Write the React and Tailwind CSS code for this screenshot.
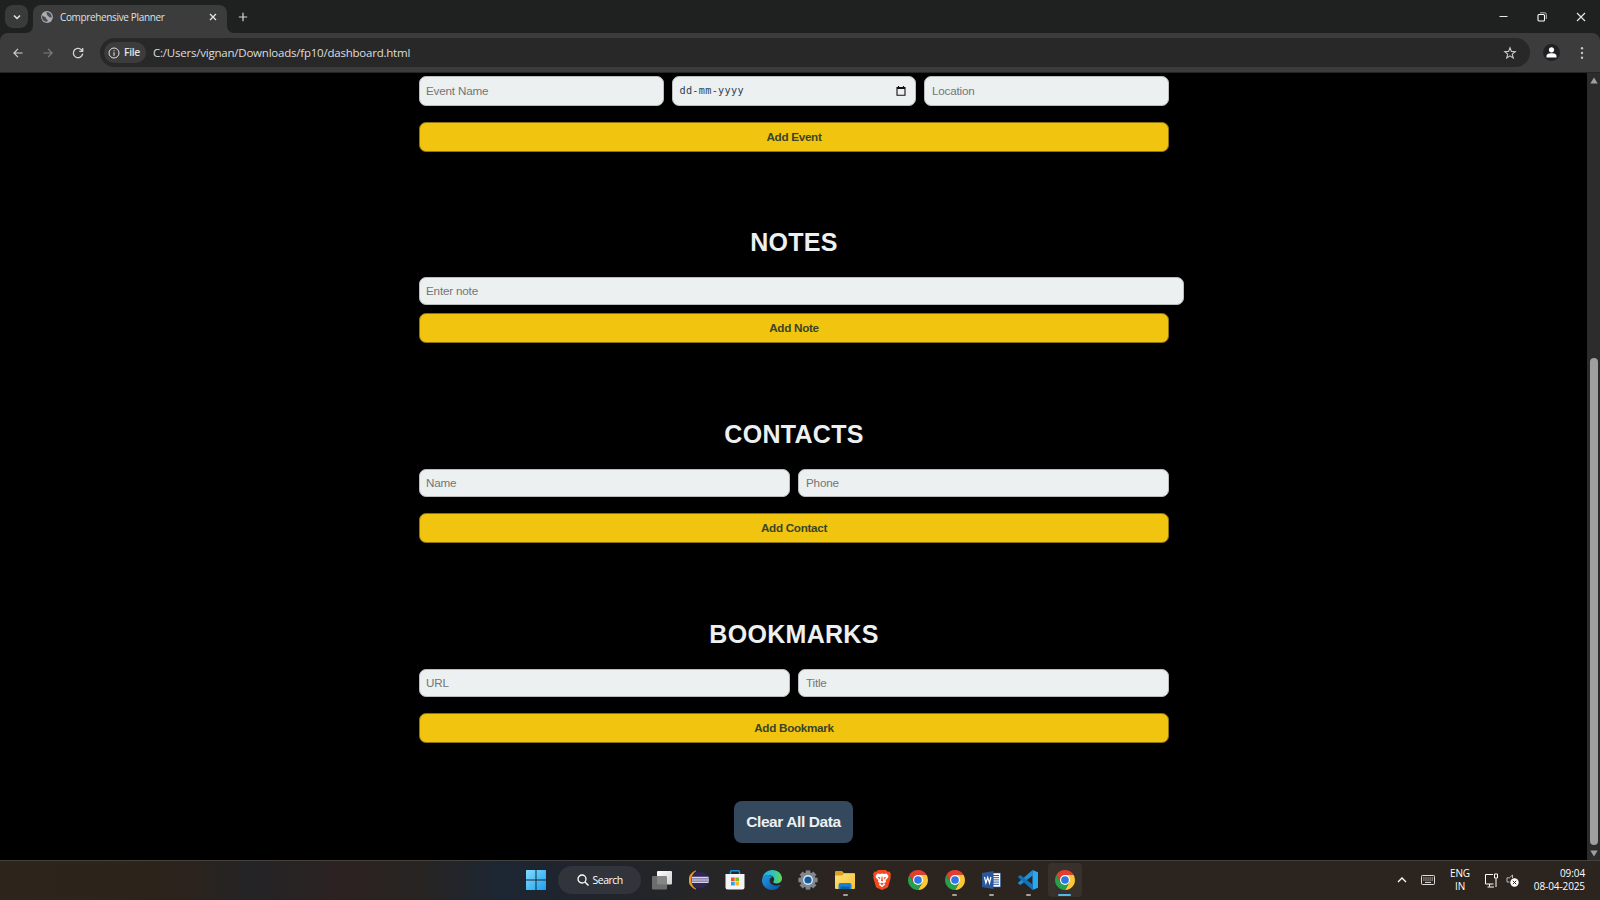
const dk = 'font-["Open_Sans",sans-serif]';

function Field({ children, w, h = 'h-7' }) {
  return (
    <div className={`${w} ${h} flex items-center rounded-[7px] border border-[#b9bcbd] bg-[#ecf0f1] px-1.5 text-[11.7px] tracking-[-0.2px] text-[#757575]`}>
      {children}
    </div>
  );
}

function AddButton({ children }) {
  return (
    <button className="flex h-[30px] w-[750px] items-center justify-center rounded-[7px] border border-[#8f760c] bg-[#f1c40f] text-[11.7px] font-bold tracking-[-0.3px] text-[#3a4528]">
      {children}
    </button>
  );
}

function Heading({ children }) {
  return <h2 className="flex h-8 w-[750px] items-center justify-center text-[25px] leading-8 font-bold tracking-[0.3px] text-[#ecf0f1]">{children}</h2>;
}

function Globe() {
  return (
    <svg viewBox="0 0 12 12" className="h-3 w-3">
      <circle cx="6" cy="6" r="5.9" fill="#a9adb1" />
      <path d="M1.2 4.2C2 5.6 3.4 5.2 4.4 6.1s.2 1.8 1.2 2.2 1.5 1 .6 2.5C3.500 11 1 9 1 6zM5.500 1.100C5 2.200 6.300 2.500 6 3.600s1.500 1 1.900 2.200 1.700.6 2.800.7C11 4 9 1.200 5.500 1.100z" fill="#4a4d50" />
    </svg>
  );
}

function Chrome() {
  return (
    <svg viewBox="0 0 48 48" className="h-5 w-5">
      <path d="M24 24V12H44.780A24 24 0 0 1 24 48L34.400 30z" fill="#fcc934" />
      <path d="M24 48A24 24 0 0 1 3.220 12L13.600 30 24 36 34.400 30z" fill="#26a04b" />
      <path d="M3.220 12A24 24 0 0 1 44.780 12H24L13.600 30z" fill="#e0402f" />
      <circle cx="24" cy="24" r="12" fill="#fff" />
      <circle cx="24" cy="24" r="9.200" fill="#2d77e5" />
    </svg>
  );
}

function Windows() {
  return (
    <svg viewBox="0 0 20 20" className="h-5 w-5">
      <defs><linearGradient id="win" x1="0" y1="0" x2="1" y2="1"><stop stopColor="#84dcfb" /><stop offset="1" stopColor="#189ff2" /></linearGradient></defs>
      <path d="M.5 0H9.500V9.500H0V.5zM10.500 0H19.500L20 .5V9.500H10.500zM0 10.500H9.500V20H.5L0 19.500zM10.500 10.500H20V19.500L19.500 20H10.500z" fill="url(#win)" />
    </svg>
  );
}

function TaskView() {
  return (
    <svg viewBox="0 0 20 19" className="h-[19px] w-5">
      <defs><linearGradient id="tv" x1="0" y1="0" x2="1" y2="1"><stop stopColor="#fff" /><stop offset="1" stopColor="#cfcfcf" /></linearGradient></defs>
      <rect x="5" y="0" width="15" height="13.500" rx="1" fill="url(#tv)" />
      <rect x="0" y="5" width="15" height="13.500" rx="1" fill="#777" fillOpacity=".88" />
    </svg>
  );
}

function Eclipse() {
  return (
    <svg viewBox="0 0 20 20" className="h-5 w-5">
      <path d="M7 .8A9.500 9.500 0 0 0 7 19.200 A11 11 0 0 1 7 .8z" fill="#f09a2a" stroke="#f09a2a" strokeWidth=".6" />
      <circle cx="11.200" cy="10" r="8.600" fill="#2f2557" />
      <path d="M3 7.500H19.600M2.800 10H20M3 12.300H19.600" stroke="#d8d6e6" strokeWidth="1.300" />
      <path d="M2.800 8.700H20M2.800 11.200H20" stroke="#a29cc4" strokeWidth="1.100" />
    </svg>
  );
}

function Store() {
  return (
    <svg viewBox="0 0 20 20" className="h-5 w-5">
      <path d="M5.500 5V2A1.300 1.300 0 0 1 6.800.7h6.400A1.300 1.300 0 0 1 14.500 2V5" fill="none" stroke="#1f93d8" strokeWidth="1.500" />
      <path d="M.5 4h19v13.500a2 2 0 0 1-2 2h-15a2 2 0 0 1-2-2z" fill="#f4f4f4" />
      <path d="M6 7.500h3.700v3.700H6z" fill="#ef5325" /><path d="M10.300 7.500H14v3.700h-3.700z" fill="#7eba28" />
      <path d="M6 11.800h3.700v3.700H6z" fill="#28a4e8" /><path d="M10.300 11.800H14v3.700h-3.700z" fill="#fbb817" />
    </svg>
  );
}

function Edge() {
  return (
    <svg viewBox="0 0 20 20" className="h-5 w-5">
      <defs>
        <linearGradient id="e1" x1="0" y1="0.300" x2="1" y2="0.300"><stop stopColor="#24a8e0" /><stop offset=".55" stopColor="#2fc4c0" /><stop offset="1" stopColor="#69d647" /></linearGradient>
        <linearGradient id="e2" x1="0" y1="0" x2="1" y2="1"><stop stopColor="#1f9de4" /><stop offset="1" stopColor="#0c4fa3" /></linearGradient>
      </defs>
      <path d="M.3 9C.8 3.500 5.200 0 10.200 0 16 0 20 4 20 8.300c0 3.200-2.400 5.200-5.200 5.200-2.500 0-3.500-.8-3.500-1.500 0-.6.900-.9.900-2.700C12.200 6.800 9.500 5 6.500 5 3.600 5 1 6.500.3 9z" fill="url(#e1)" />
      <path d="M6.500 5C3 5 0 7.300 0 10.500 0 15.700 4.500 20 10 20c4 0 6.800-2 8.300-4.500.2-.4-.2-.7-.6-.5-1.200.5-2.500.7-3.600.7C10.400 15.700 7.600 13.500 7.600 10.600c0-1.700.9-3 2.600-3.700C9.300 5.700 8 5 6.500 5z" fill="url(#e2)" />
    </svg>
  );
}

function Gear() {
  return (
    <svg viewBox="0 0 20 20" className="h-5 w-5">
      <g stroke="#80878e" strokeWidth="4.600">
        <path d="M10 .4V19.600" />
        <path d="M10 .4V19.600" transform="rotate(45 10 10)" />
        <path d="M10 .4V19.600" transform="rotate(90 10 10)" />
        <path d="M10 .4V19.600" transform="rotate(135 10 10)" />
      </g>
      <circle cx="10" cy="10" r="7.700" fill="#80878e" />
      <circle cx="10" cy="10" r="4.900" fill="#e9edf0" />
      <circle cx="10" cy="10" r="3.600" fill="#1259a0" />
    </svg>
  );
}

function Folder() {
  return (
    <svg viewBox="0 0 20 18" className="h-[18px] w-5">
      <defs><linearGradient id="fo" x1="0" y1="0" x2="1" y2="1"><stop stopColor="#ffe07a" /><stop offset="1" stopColor="#f8c137" /></linearGradient></defs>
      <path d="M0 1a1 1 0 0 1 1-1h6l2 2h10a1 1 0 0 1 1 1v5H0z" fill="#dba11d" />
      <path d="M0 4.500h7l2-2h10a1 1 0 0 1 1 1v13.500a1 1 0 0 1-1 1H1a1 1 0 0 1-1-1z" fill="url(#fo)" />
      <path d="M3.500 18V14a2 2 0 0 1 2-2h9a2 2 0 0 1 2 2v4z" fill="#1683cf" />
      <path d="M5.500 15.500h9V18h-9z" fill="#0a60a8" />
    </svg>
  );
}

function Brave() {
  return (
    <svg viewBox="0 0 18 20" className="h-5 w-[18px]">
      <path d="M5 0h8l1.700 1.800 1.800-.2L18 4.200l-.6 1.700.4 1.500-2.600 9c-.3.800-.8 1.300-1.500 1.700L9 20.000 4.300 18.100c-.7-.4-1.200-.9-1.500-1.700L.2 7.400l.4-1.500L0 4.200l1.500-2.600 1.800.2z" fill="#f4491f" />
      <path d="M9 3.500l2 .4 2.500-.5 2 2.600-.6 1.700-2.300 2.500.5 1.700-2 1.200 1 1.700L9 17.200l-3.100-2.400 1-1.700-2-1.200.5-1.700L3.100 7.700 2.500 6l2-2.600 2.500.5z" fill="#fff" />
      <path d="M4.500 6.800l2.800.7-.4 2zM13.500 6.800l-2.800.7.4 2zM9 12.700l2 .9-2 1.600-2-1.600zM8.600 6.500h.8l.5 4.500-.9.500-.9-.5z" fill="#f4491f" />
    </svg>
  );
}

function Word() {
  return (
    <svg viewBox="0 0 19 18" className="h-[18px] w-[19px]">
      <rect x="9" y="2" width="9.500" height="14" fill="#fff" stroke="#2b579a" strokeWidth=".6" />
      <path d="M11 4.500h6M11 6.700h6M11 8.900h6M11 11.100h6M11 13.300h6" stroke="#2b579a" strokeWidth="1" />
      <path d="M0 2 11.500 0v18L0 16z" fill="#2b579a" />
      <path d="M2.500 6l1.400 6L5.700 6.500 7.500 12l1.400-6" fill="none" stroke="#fff" strokeWidth="1.200" />
    </svg>
  );
}

function Code() {
  return (
    <svg viewBox="0 0 20 20" className="h-5 w-5">
      <path d="M14.500 0 20 2.300v15.400L14.500 20 14.500 14.500V5.500z" fill="#2aa7f0" />
      <path d="M14.500 0 15 5.300 2.300 15 0 13.300V12.800z" fill="#1f8fd9" />
      <path d="M14.500 20 15 14.700 2.300 5 0 6.700V7.200z" fill="#0f74bd" />
    </svg>
  );
}

function Task({ children, dot, active }) {
  return (
    <div className={`relative flex h-[34px] w-[34px] items-center justify-center rounded ${active ? 'bg-[#38312b]' : ''}`}>
      {children}
      {dot && <span className="absolute bottom-px h-[2px] w-[5px] rounded-full bg-[#a5a09b]" />}
      {active && <span className="absolute bottom-px h-[2.500px] w-[13px] rounded-full bg-[#54b6ea]" />}
    </div>
  );
}

function TabBar() {
  return (
    <div className="flex h-[33px] bg-[#1f2121]">
      <div className="flex w-[33px] items-start pt-[5px] pl-[5px]">
        <div className="flex h-[23px] w-[23px] items-center justify-center rounded-lg bg-[#3a3a3a]">
          <svg viewBox="0 0 10 10" className="h-2.5 w-2.5"><path d="M2 3.500 5 6.500 8 3.500" fill="none" stroke="#e3e3e3" strokeWidth="1.500" /></svg>
        </div>
      </div>
      <div className="relative mt-[5px] flex h-7 w-[194px] items-center rounded-t-lg bg-[#3c3c3c] pr-[9px] pb-[4px] pl-2">
        <svg viewBox="0 0 7 7" className="absolute bottom-0 -left-[7px] h-[7px] w-[7px]"><path d="M7 0V7H0A7 7 0 0 0 7 0z" fill="#3c3c3c" /></svg>
        <svg viewBox="0 0 7 7" className="absolute -right-[7px] bottom-0 h-[7px] w-[7px]"><path d="M0 0V7H7A7 7 0 0 1 0 0z" fill="#3c3c3c" /></svg>
        <Globe />
        <span className={`${dk} mt-px ml-[7px] flex-1 text-[10px] tracking-[-0.350px] text-[#dfe1e3]`}>Comprehensive Planner</span>
        <svg viewBox="0 0 10 10" className="h-2.5 w-2.5"><path d="M2 2 8 8M8 2 2 8" stroke="#e3e3e3" strokeWidth="1.300" /></svg>
      </div>
      <svg viewBox="0 0 10 10" className="mt-[12px] ml-[11px] h-[10px] w-[10px]"><path d="M5 .8V9.200M.8 5H9.200" stroke="#d6d6d6" strokeWidth="1.200" /></svg>
      <div className="flex-1" />
      <div className="flex h-[33px] w-[101px] items-center justify-between pr-[14px]">
        <svg viewBox="0 0 9 9" className="h-[9px] w-[9px]"><path d="M.5 4.500H8.500" stroke="#e8e8e8" strokeWidth="1" /></svg>
        <svg viewBox="0 0 10 10" className="h-[10px] w-[10px]"><path d="M3 .8H7.800A1.500 1.500 0 0 1 9.300 2.300V7" fill="none" stroke="#bbb" strokeWidth="1" /><rect x="1" y="2.500" width="6.500" height="6.500" rx="1" fill="none" stroke="#fff" strokeWidth="1.100" /></svg>
        <svg viewBox="0 0 10 10" className="h-[10px] w-[10px]"><path d="M1 1 9 9M9 1 1 9" stroke="#e8e8e8" strokeWidth="1.100" /></svg>
      </div>
    </div>
  );
}

function AddressBar() {
  return (
    <div className="bg-[#1f2121]">
      <div className="flex h-10 items-center rounded-t-lg border-b border-[#252525] bg-[#3c3c3c]">
        <svg viewBox="0 0 10 10" className="ml-[13px] h-[10px] w-[10px]"><path d="M9.600 5H1M5 .8.9 5 5 9.200" fill="none" stroke="#cfcfcf" strokeWidth="1.200" /></svg>
        <svg viewBox="0 0 10 10" className="ml-5 h-[10px] w-[10px]"><path d="M.4 5H9M5 .8 9.100 5 5 9.200" fill="none" stroke="#7d7d7d" strokeWidth="1.200" /></svg>
        <svg viewBox="0 0 12 12" className="ml-[19px] h-3 w-3"><path d="M10.200 3.800A4.700 4.700 0 1 0 10.700 6.600M10.700 1V4.400H7.300" fill="none" stroke="#d6d6d6" strokeWidth="1.300" /></svg>
        <div className="ml-[16px] flex h-[29px] w-[1430px] items-center rounded-full bg-[#282828] pl-[4px]">
          <div className="flex h-[21px] w-[42px] items-center rounded-full bg-[#3c3c3c] pl-[4px]">
            <svg viewBox="0 0 12 12" className="h-3 w-3"><circle cx="6" cy="6" r="5" fill="none" stroke="#e3e3e3" strokeWidth="1" /><path d="M6 5.200V8.800M6 3.200V4.300" stroke="#e3e3e3" strokeWidth="1.100" /></svg>
            <span className={`${dk} ml-1 text-[10.300px] font-semibold tracking-[-0.300px] text-[#e3e3e3]`}>File</span>
          </div>
          <span className={`${dk} ml-[7px] flex-1 text-[11.500px] tracking-[-0.220px] text-[#dedede]`}>C:/Users/vignan/Downloads/fp10/dashboard.html</span>
          <svg viewBox="0 0 24 24" className="mr-[13px] h-[14px] w-[14px]"><path d="M12 3l2.400 6.200 6.600.5-5.100 4.300 1.700 6.500-5.600-3.600-5.600 3.600 1.700-6.500L3 9.700l6.600-.5z" fill="none" stroke="#c8c8c8" strokeWidth="1.900" /></svg>
        </div>
        <svg viewBox="0 0 17 17" className="ml-[13px] h-[17px] w-[17px]"><circle cx="8.500" cy="8.500" r="8.500" fill="#202124" /><circle cx="8.500" cy="5.800" r="2.600" fill="#fff" /><path d="M3.500 13.500V12C3.500 10 6 9.300 8.500 9.300S13.500 10 13.500 12V13.500z" fill="#fff" /></svg>
        <svg viewBox="0 0 4 14" className="ml-[20px] h-[14px] w-1"><g fill="#c4c4c4"><circle cx="2" cy="2.300" r="1.200" /><circle cx="2" cy="7" r="1.200" /><circle cx="2" cy="11.700" r="1.200" /></g></svg>
      </div>
    </div>
  );
}

function Taskbar() {
  return (
    <div className={`${dk} flex h-10 border-t border-[#45413d] bg-[linear-gradient(90deg,#2d241b_0px,#2c231c_180px,#242326_250px,#2c2221_340px,#272422_420px,#1c2633_500px,#20242c_590px,#272626_720px,#2c241f_850px,#2c251f_1600px)] text-white`}>
      <div className="ml-[519px] flex items-center pb-px">
        <Task><Windows /></Task>
        <div className="ml-[5px] flex h-7 w-[83px] items-center rounded-full bg-[#31343a] pl-[19px]">
          <svg viewBox="0 0 12 12" className="h-3 w-3"><circle cx="5" cy="5" r="4" fill="none" stroke="#fff" strokeWidth="1.300" /><path d="M8 8 11.500 11.500" stroke="#fff" strokeWidth="1.400" /></svg>
          <span className="mt-px ml-[3.500px] text-[10.500px] tracking-[-0.500px]">Search</span>
        </div>
        <div className="ml-[4px] flex gap-[2.620px]">
          <Task><TaskView /></Task>
          <Task><Eclipse /></Task>
          <Task><Store /></Task>
          <Task><Edge /></Task>
          <Task><Gear /></Task>
          <Task dot><Folder /></Task>
          <Task><Brave /></Task>
          <Task><Chrome /></Task>
          <Task dot><Chrome /></Task>
          <Task dot><Word /></Task>
          <Task dot><Code /></Task>
          <Task active><Chrome /></Task>
        </div>
      </div>
      <div className="flex-1" />
      <div className="flex items-center pr-[15px] pb-px text-[10px] leading-[13px] tracking-[-0.100px]">
        <svg viewBox="0 0 10 10" className="h-[10px] w-[10px]"><path d="M1 7 5 3 9 7" fill="none" stroke="#fff" strokeWidth="1.300" /></svg>
        <svg viewBox="0 0 14 10" className="ml-[14px] h-[10px] w-[14px]"><rect x=".5" y=".5" width="13" height="9" rx=".8" fill="none" stroke="#ddd" /><path d="M2.300 3H12M2.300 5H12" stroke="#ddd" strokeWidth="1" strokeDasharray="1.200 .9" /><path d="M4 7.400H10" stroke="#ddd" /></svg>
        <div className="ml-[14px] w-[22px] text-center">ENG<br />IN</div>
        <svg viewBox="0 0 15 15" className="ml-[13px] h-[15px] w-[15px]"><path d="M9 1.500H1.500V11H9.500M5.500 11V13.500M3.500 14H10M12 5.500V14M10.500 1h3V5h-3z" fill="none" stroke="#fff" strokeWidth="1" /></svg>
        <svg viewBox="0 0 13 13" className="ml-[7px] h-[13px] w-[13px]"><path d="M6.500 4V1L3.500 3.800H1V8H3.500" fill="none" stroke="#bbb" /><circle cx="8.500" cy="8.500" r="4.200" fill="#fff" /><path d="M6.800 6.800 10.200 10.200M10.200 6.800 6.800 10.200" stroke="#2c251f" strokeWidth="1" /></svg>
        <div className="ml-[13px] w-[53px] text-right whitespace-nowrap">09:04<br />08-04-2025</div>
      </div>
    </div>
  );
}

export default function App() {
  return (
    <div className="flex h-[900px] w-[1600px] flex-col overflow-hidden bg-black font-['Liberation_Sans',Arial,sans-serif]">
      <TabBar />
      <AddressBar />
      <div className="flex h-[787px]">
        <main className="flex flex-1 flex-col pt-[3px] pl-[419px]">
          <div className="flex gap-2">
            <Field w="w-[244.500px]" h="h-[30px]"><span className="pb-px">Event Name</span></Field>
            <Field w="w-[244.500px]" h="h-[30px]">
              <span className="ml-px flex-1 font-['DejaVu_Sans_Mono',monospace] text-[10.200px] tracking-[0.300px] text-[#2c3e50]">dd-mm-yyyy</span>
              <svg viewBox="0 0 10 10" className="mr-[3px] h-[10px] w-[10px]"><path d="M1 1.500H9V9.200H1zM1 2.500H9M2.500 0V2M7.500 0V2" fill="none" stroke="#111" strokeWidth="1.100" /></svg>
            </Field>
            <Field w="w-[244.500px]" h="h-[30px]"><span className="pb-px pl-px">Location</span></Field>
          </div>
          <div className="mt-4"><AddButton>Add Event</AddButton></div>
          <div className="mt-[74px]"><Heading>NOTES</Heading></div>
          <div className="mt-[19px]"><Field w="w-[765px]">Enter note</Field></div>
          <div className="mt-2"><AddButton>Add Note</AddButton></div>
          <div className="mt-[75px]"><Heading>CONTACTS</Heading></div>
          <div className="mt-[19px] flex gap-2"><Field w="w-[371px]">Name</Field><Field w="w-[371px]"><span className="pl-px">Phone</span></Field></div>
          <div className="mt-4"><AddButton>Add Contact</AddButton></div>
          <div className="mt-[75px]"><Heading>BOOKMARKS</Heading></div>
          <div className="mt-[19px] flex gap-2"><Field w="w-[371px]">URL</Field><Field w="w-[371px]"><span className="pl-px">Title</span></Field></div>
          <div className="mt-4"><AddButton>Add Bookmark</AddButton></div>
          <button className="mt-[58px] ml-[315px] flex h-[42px] w-[119px] items-center justify-center rounded-lg bg-[#34495e] text-[15.500px] font-bold tracking-[-0.400px] whitespace-nowrap text-[#ecf0f1]">Clear All Data</button>
        </main>
        <div className="flex w-[13px] flex-col items-center bg-[#2c2c2c] pt-1 pb-[3px]">
          <svg viewBox="0 0 8 7" className="h-[7px] w-2"><path d="M4 .5 7.700 6.500H.3z" fill="#9f9f9f" /></svg>
          <div className="mt-[274px] h-[487px] w-2 rounded-full bg-[#9f9f9f]" />
          <div className="flex-1" />
          <svg viewBox="0 0 8 7" className="h-[7px] w-2"><path d="M4 6.500 7.700 .5H.3z" fill="#9f9f9f" /></svg>
        </div>
      </div>
      <Taskbar />
    </div>
  );
}
